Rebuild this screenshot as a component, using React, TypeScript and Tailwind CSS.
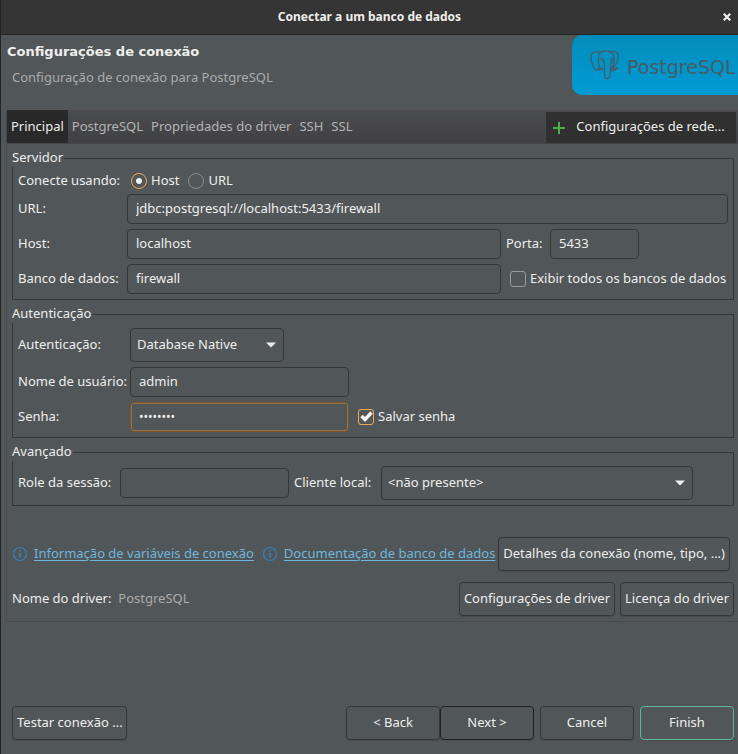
import type { ButtonHTMLAttributes, InputHTMLAttributes, ReactNode, SelectHTMLAttributes } from "react";

const control = "rounded border border-[#33373a] bg-[#515759] pb-0.5 text-[#eeeeec]";

function Button({ className = "", ...props }: ButtonHTMLAttributes<HTMLButtonElement>) {
  return (
    <button
      type="button"
      className={`h-[34px] shrink-0 whitespace-nowrap rounded border bg-[#515759] px-1 pb-0.5 shadow-[0_1px_1px_#474c4e] ${className}`}
      {...props}
    />
  );
}

function TextField({ className = "", ...props }: InputHTMLAttributes<HTMLInputElement>) {
  return <input className={`h-[30px] min-w-0 px-2 outline-none ${control} ${className}`} {...props} />;
}

function Select({ className = "", children, ...props }: SelectHTMLAttributes<HTMLSelectElement>) {
  return (
    <div className={`relative ${className}`}>
      <select className={`block h-[34px] w-full appearance-none pl-1.5 pr-8 outline-none ${control}`} {...props}>
        {children}
      </select>
      <svg className="pointer-events-none absolute right-2 top-[14px]" width="10" height="6" viewBox="0 0 10 6" aria-hidden="true">
        <path d="M0 .5h10L5 5.500z" fill="#eeeeec" />
      </svg>
    </div>
  );
}

function CheckBox({ id, label, checked = false }: { id: string; label: string; checked?: boolean }) {
  return (
    <div className="flex items-center gap-1">
      <span className="relative h-4 w-4">
        <input
          id={id}
          type="checkbox"
          defaultChecked={checked}
          className="peer block h-4 w-4 appearance-none rounded-[3px] border border-[#999b9a] checked:border-[#f0a658]"
        />
        <svg
          className="pointer-events-none absolute inset-0 hidden peer-checked:block"
          width="16"
          height="16"
          viewBox="0 0 16 16"
          fill="none"
          aria-hidden="true"
        >
          <path d="M3.5 7 7 10.500l6.500-7" stroke="#f2f2f0" strokeWidth="3.4" />
        </svg>
      </span>
      <label htmlFor={id} className="whitespace-nowrap pb-0.5">
        {label}
      </label>
    </div>
  );
}

function Radio({ id, label, checked = false }: { id: string; label: string; checked?: boolean }) {
  return (
    <div className="flex items-center gap-1">
      <input
        id={id}
        type="radio"
        name="modo"
        defaultChecked={checked}
        className="h-4 w-4 appearance-none rounded-full border border-[#8b8e8e] checked:border-[#f0a658] checked:bg-[radial-gradient(circle,#f2f2f0_2.5px,transparent_3.5px)]"
      />
      <label htmlFor={id}>{label}</label>
    </div>
  );
}

function Group({ title, children }: { title: string; children: ReactNode }) {
  return (
    <fieldset className="min-w-0 border border-[#33373a] px-[5px] pb-[5px] pt-[5px]">
      <legend className="-ml-1.5 bg-[#515759] pb-0.5 pr-px leading-[15px]">{title}</legend>
      {children}
    </fieldset>
  );
}

function InfoLink({ children }: { children: ReactNode }) {
  return (
    <div className="flex items-center gap-1.5">
      <svg width="16" height="16" viewBox="0 0 16 16" fill="none" stroke="#3584c0" aria-hidden="true">
        <circle cx="8" cy="8" r="6.500" strokeWidth="1.200" />
        <path d="M8 7v4.500M8 4.500v1.300" strokeWidth="1.600" />
      </svg>
      <a href="#info" className="whitespace-nowrap pb-0.5 text-[#6fb5dd] underline underline-offset-2">
        {children}
      </a>
    </div>
  );
}

function Banner() {
  return (
    <div className="flex h-[60px] w-[166px] shrink-0 items-center overflow-hidden rounded-l-[10px] bg-linear-to-b from-[#028dbb] to-[#019bd3] pl-[18px]">
      <svg className="shrink-0" width="30" height="30" viewBox="0 0 30 30" fill="none" stroke="#455d68" strokeWidth="1.300" strokeLinejoin="round" strokeLinecap="round" aria-hidden="true">
        <path d="M10 2.500C6.500 1 1.500 1.500 1 6c-.3 4 2 12 4.500 14 1.500 1 3-.5 4-2.500" />
        <path d="M10 2.500C8 5 8.500 8.500 8.500 12c0 3 .5 5 2.500 6.500" />
        <path d="M10 2.500C13 .5 18 .3 21 2.500c2.500 2 3.500 5 3 8.500-.3 3-1 5-2.500 7.500" />
        <path d="M20 1.800c3.500-1 8-.3 8.300 3.700.2 4-2.300 9-5 12" />
        <path d="M21 18.500c2.200.8 4.700.5 6.500-1-.5 2.200-3.500 3.500-6.500 3" />
        <path d="M8 19.500c2 .8 3.500 0 5.500-1" />
        <path d="M12.500 9.500c2 2 2.300 5 2 9-.2 3-.2 6 .5 8.500 1 2.500 4.500 2.300 5-.5.700-3 .3-7 .5-10 .2-3 .2-5 2-7" />
        <path d="M10 8.800h3M20.500 8.800h3" />
      </svg>
      <span className="pl-[7px] pt-1 font-['DejaVu_Sans'] text-[19px] text-[#455d68]">PostgreSQL</span>
    </div>
  );
}

export default function App() {
  return (
    <div className="flex min-h-screen flex-col border-l border-[#232323] bg-[#515759] font-['Noto_Sans',sans-serif] text-[13px] leading-[17px] text-[#eeeeec]">
      <header className="relative flex h-[35px] items-center justify-center border-b border-[#242626] bg-[#353535] pb-px">
        <h1 className="text-xs font-bold">Conectar a um banco de dados</h1>
        <button type="button" aria-label="Fechar" className="absolute right-[5px] flex h-5 w-3 items-center justify-center">
          <svg width="8" height="8" viewBox="0 0 8 8" stroke="#eeeeec" strokeWidth="2.200" aria-hidden="true">
            <path d="m.8.8 6.400 6.400M7.200.8.8 7.200" />
          </svg>
        </button>
      </header>

      <section className="flex h-[75px] items-start justify-between">
        <div className="pl-1.5 pt-2">
          <h2 className="font-['DejaVu_Sans'] font-bold">Configurações de conexão</h2>
          <p className="pl-[5px] pt-[9px] text-[#a9abab]">Configuração de conexão para PostgreSQL</p>
        </div>
        <Banner />
      </section>

      <main className="ml-[5px] border-b border-l border-[#474b4d]">
        <div className="flex h-[34px] items-stretch justify-between border-b border-[#434648] bg-linear-to-b from-[#4b4c4f] to-[#414143] pr-0.5">
          <div role="tablist" className="flex gap-2 text-[#b3b4b4]">
            <button type="button" role="tab" aria-selected="true" className="-mr-1 bg-[#292929] px-1 text-[#eeeeec]">
              Principal
            </button>
            <button type="button" role="tab" aria-selected="false">PostgreSQL</button>
            <button type="button" role="tab" aria-selected="false">Propriedades do driver</button>
            <button type="button" role="tab" aria-selected="false">SSH</button>
            <button type="button" role="tab" aria-selected="false">SSL</button>
          </div>
          <button type="button" className="mt-0.5 flex w-[190px] items-center bg-[#303030] pl-[7px]">
            <svg width="12" height="12" viewBox="0 0 12 12" stroke="#4fae4a" strokeWidth="2" aria-hidden="true">
              <path d="M0 6h12M6 0v12" />
            </svg>
            <span className="flex-1 pb-0.5">Configurações de rede...</span>
          </button>
        </div>

        <div className="flex flex-col gap-1.5 px-[5px] pb-[5px] pt-1.5 pr-1">
          <Group title="Servidor">
            <div className="grid grid-cols-[109px_minmax(0,1fr)_227px] items-center gap-y-[5px] [&>label]:pb-0.5">
              <span>Conecte usando:</span>
              <div className="col-span-2 flex h-[17px] items-center gap-[9px] pl-1">
                <Radio id="modo-host" label="Host" checked />
                <Radio id="modo-url" label="URL" />
              </div>
              <label htmlFor="url">URL:</label>
              <TextField id="url" className="col-span-2" defaultValue="jdbc:postgresql://localhost:5433/firewall" />
              <label htmlFor="host">Host:</label>
              <TextField id="host" defaultValue="localhost" />
              <div className="flex items-center pl-[5px]">
                <label htmlFor="porta" className="w-11 pb-0.5">Porta:</label>
                <TextField id="porta" className="w-[89px]" defaultValue="5433" />
              </div>
              <label htmlFor="banco">Banco de dados:</label>
              <TextField id="banco" defaultValue="firewall" />
              <div className="pl-[9px]">
                <CheckBox id="todos" label="Exibir todos os bancos de dados" />
              </div>
            </div>
          </Group>

          <Group title="Autenticação">
            <div className="grid grid-cols-[112px_minmax(0,1fr)] items-center gap-y-[5px] [&>label]:pb-0.5">
              <label htmlFor="auth">Autenticação:</label>
              <Select id="auth" className="w-[154px]">
                <option>Database Native</option>
              </Select>
              <label htmlFor="usuario">Nome de usuário:</label>
              <TextField id="usuario" className="w-[219px]" defaultValue="admin" />
              <label htmlFor="senha">Senha:</label>
              <div className="flex items-center gap-[9px]">
                <input
                  id="senha"
                  type="password"
                  defaultValue="firewall"
                  className="h-[30px] w-[219px] rounded border border-[#7d5429] bg-[#515759] px-2 pb-0.5 text-xs text-[#eeeeec] shadow-[inset_0_0_0_1px_#92744f] outline-none"
                />
                <CheckBox id="salvar" label="Salvar senha" checked />
              </div>
            </div>
          </Group>

          <Group title="Avançado">
            <div className="flex items-center gap-[5px] whitespace-nowrap [&>label]:pb-0.5">
              <label htmlFor="role" className="w-[97px]">Role da sessão:</label>
              <TextField id="role" className="w-[169px]" />
              <label htmlFor="cliente" className="w-[82px]">Cliente local:</label>
              <Select id="cliente" className="w-[312px]">
                <option>&lt;não presente&gt;</option>
              </Select>
            </div>
          </Group>

          <div className="mt-[25px] flex items-center justify-between pr-1">
            <div className="flex gap-2">
              <InfoLink>Informação de variáveis de conexão</InfoLink>
              <InfoLink>Documentação de banco de dados</InfoLink>
            </div>
            <Button className="border-[#33373a]">Detalhes da conexão (nome, tipo, ...)</Button>
          </div>

          <div className="mt-[5px] flex items-center gap-[5px]">
            <span className="pb-0.5">Nome do driver:</span>
            <span className="pb-0.5 pl-0.5 text-[#a9abab]">PostgreSQL</span>
            <Button className="ml-auto border-[#33373a]">Configurações de driver</Button>
            <Button className="border-[#33373a]">Licença do driver</Button>
          </div>
        </div>
      </main>

      <footer className="mt-auto flex pb-3.5 pl-[11px] pr-1">
        <Button className="mr-auto w-[115px] border-[#33373a]">Testar conexão ...</Button>
        <Button className="w-[94px] border-[#33373a]">&lt; Back</Button>
        <Button className="w-[94px] border-[#202222]">Next &gt;</Button>
        <Button className="ml-1.5 w-[94px] border-[#33373a]">Cancel</Button>
        <Button className="ml-1.5 w-[94px] border-[#5fb894]">Finish</Button>
      </footer>
    </div>
  );
}
